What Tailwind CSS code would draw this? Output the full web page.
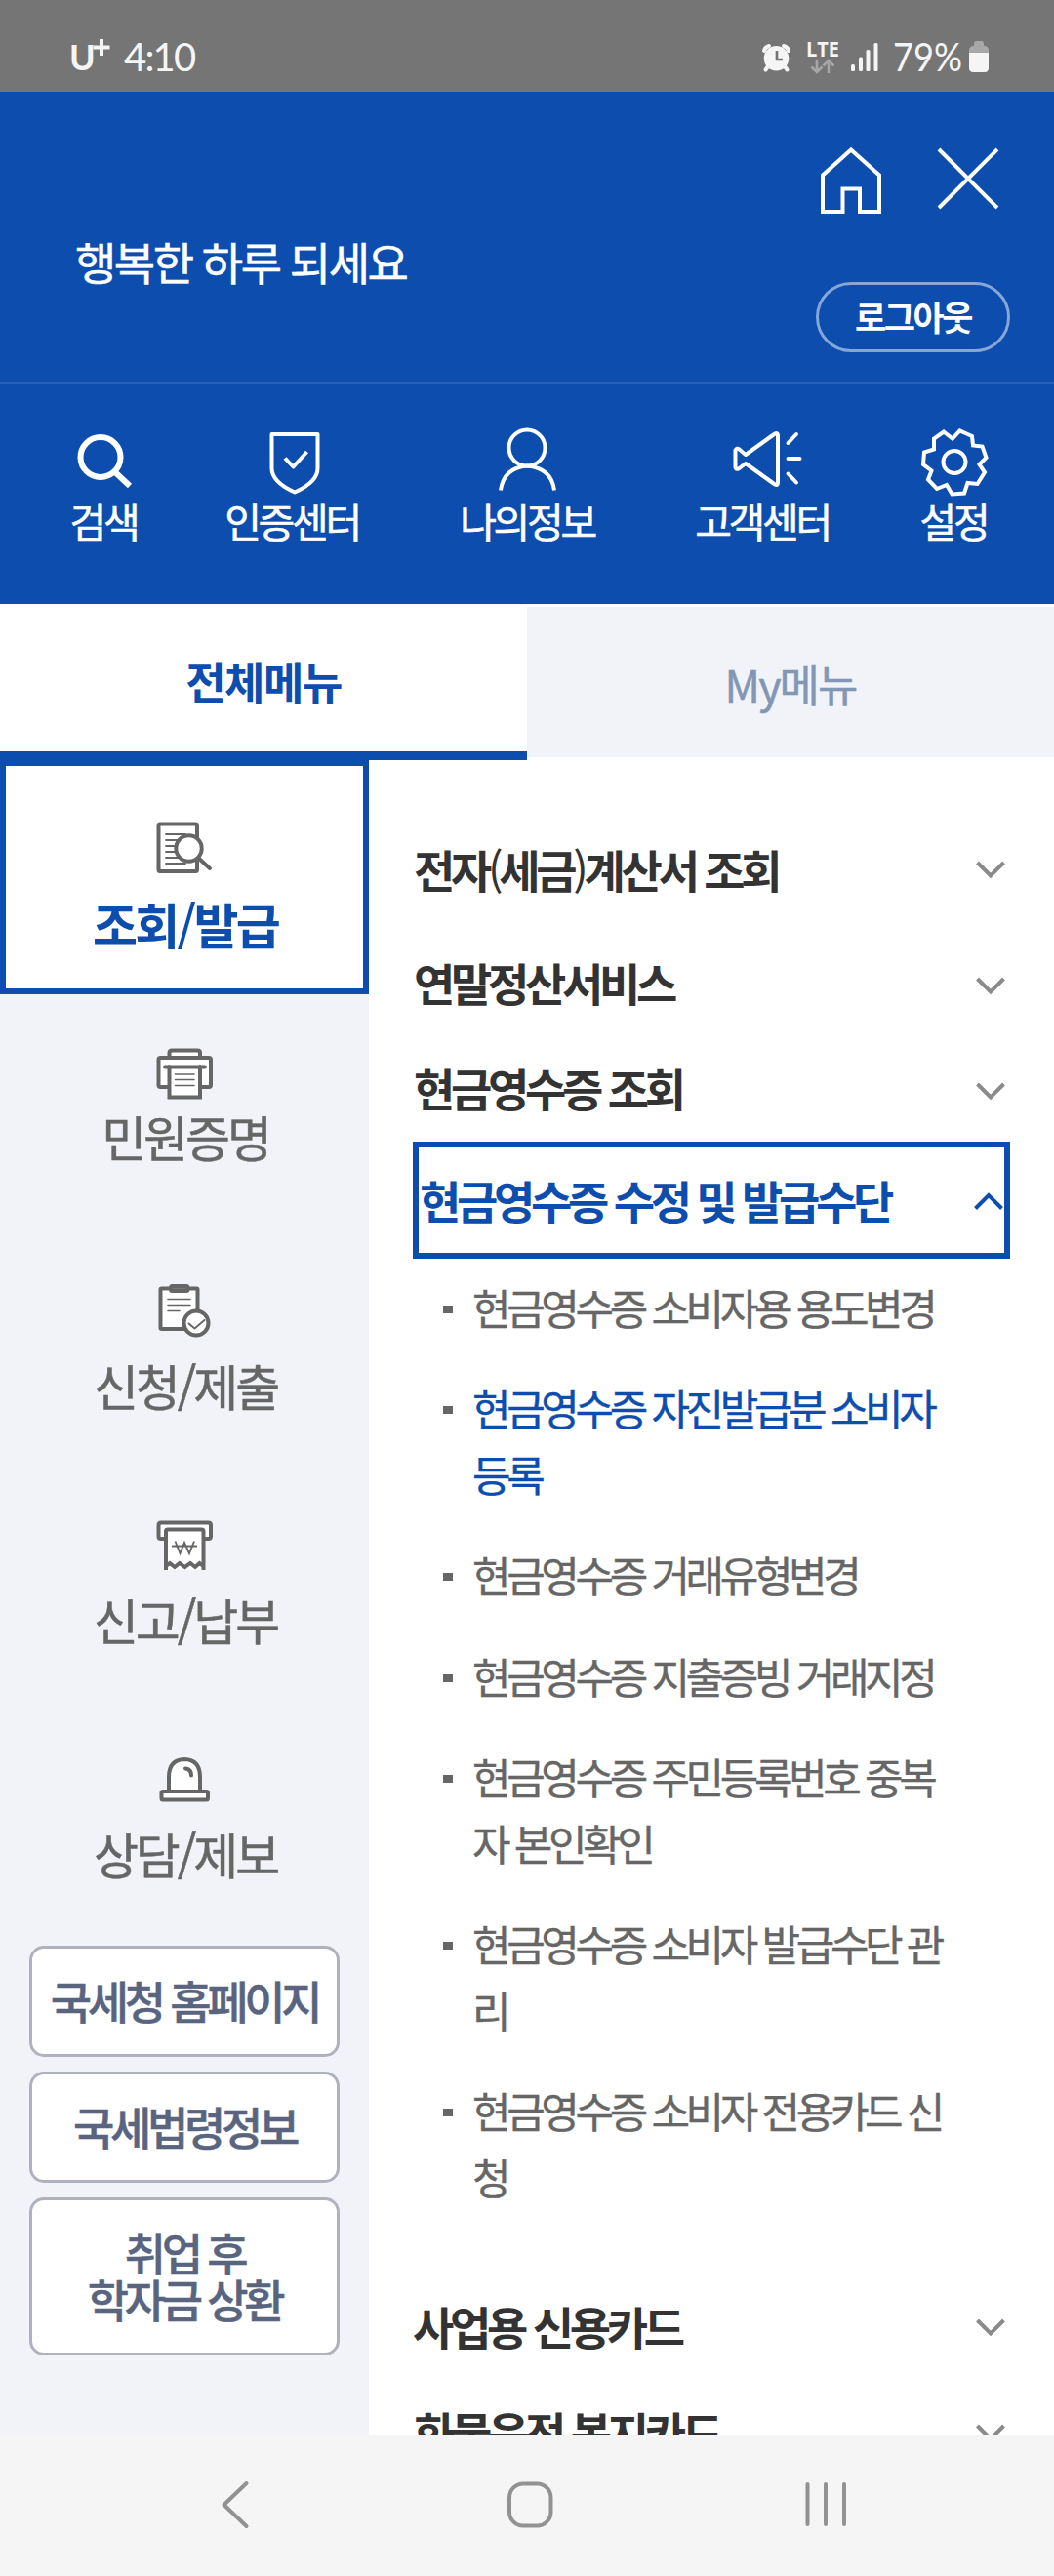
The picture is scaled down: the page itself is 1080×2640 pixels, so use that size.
<!DOCTYPE html>
<html lang="ko">
<head>
<meta charset="utf-8">
<title>홈택스 전체메뉴</title>
<script src="https://cdn.jsdelivr.net/npm/@tailwindcss/browser@4"></script>
</head>
<body class="w-[1080px] h-[2640px] overflow-hidden bg-white font-['Noto_Sans_CJK_KR',sans-serif] flex flex-col">

<!-- status bar -->
<div class="h-[94px] shrink-0 bg-[#757575] text-[#f5f5f5] flex items-start justify-between pl-[71px] pr-[66px]">
  <div class="flex pt-[30px] leading-[56px]">
    <span class="w-[30px] text-[36px] font-bold font-['Lato',sans-serif]">U</span>
    <svg class="w-[20px] h-[18px] -ml-[6px] mt-[10px]" viewBox="0 0 20 18" fill="none" stroke="#f5f5f5" stroke-width="4"><path d="M9 0v17M.5 8.500h17"/></svg>
    <span class="ml-[12px] text-[40px] tracking-[-1.800px] font-['Lato',sans-serif]">4:10</span>
  </div>
  <div class="flex pt-[22px]">
    <svg class="w-[234px] h-[66px]" viewBox="780 22 234 66">
      <g fill="none" stroke="#f5f5f5" stroke-width="4" stroke-linecap="round"><path d="M783 52q1-4 5-5M808 52q-1-4-5-5M787 68l-2.500 3.500M804 68l2.500 3.500"/></g>
      <circle cx="795.500" cy="59.800" r="12.800" fill="#f5f5f5"/>
      <path d="M796 52v9h6" fill="none" stroke="#757575" stroke-width="2.600"/>
      <g fill="none" stroke="#a6a6a6" stroke-width="2.600"><path d="M837 61v13M831.500 68.500l5.500 5.500 5.500-5.500M849 75V62M843.500 67.500l5.500-5.500 5.500 5.500"/></g>
      <g fill="#f5f5f5"><rect x="872" y="66" width="4" height="7" rx="1.500"/><rect x="880" y="58.500" width="4" height="14.500" rx="1.500"/><rect x="887.500" y="51" width="4" height="22" rx="1.500"/><rect x="895.500" y="44" width="4" height="29" rx="1.500"/></g>
      <path d="M998 44.500q0-2.500 2.500-2.500h5q2.500 0 2.500 2.500v2q5 1 5 5V55h-20v-3.500q0-4 5-5z" fill="#a8a8a8"/>
      <path d="M993 54h20v15.500q0 4.500-4.500 4.500h-11q-4.500 0-4.500-4.500z" fill="#f5f5f5"/>
      <text x="826" y="58" font-family="Open Sans" font-weight="700" font-size="21" textLength="34" lengthAdjust="spacingAndGlyphs" fill="#f5f5f5">LTE</text>
      <text x="915" y="72.500" font-family="Lato" font-size="40" textLength="71" lengthAdjust="spacingAndGlyphs" fill="#f5f5f5">79%</text>
    </svg>
  </div>
</div>

<!-- header -->
<header class="h-[525px] shrink-0 bg-[#0d4dae] text-white">
  <div class="h-[300px] border-b-3 border-[#2960b7] flex justify-between pl-[77px] pr-[45px]">
    <div class="pt-[143px] text-[46px] leading-[60px] tracking-[-2.500px] [-webkit-text-stroke:0.6px]">행복한 하루 되세요</div>
    <div class="w-[199px] pt-[56px]">
      <div class="flex justify-between pl-[4px] pr-[11px]">
        <svg class="w-[64px] h-[71px]" viewBox="840 150 64 71" fill="none" stroke="#fff" stroke-width="4"><path d="M843 217V179.500L872 153.500 901 179.500V217H881V193.500H863.500V217Z"/></svg>
        <svg class="w-[64px] h-[66px]" viewBox="960 151 64 66" fill="none" stroke="#fff" stroke-width="4"><path d="M962 154l60 60M1022 154l-60 60"/></svg>
      </div>
      <div class="mt-[68px] h-[72px] border-3 border-[#86a6d7] rounded-full text-center text-[35px] leading-[63px] font-bold tracking-[-2.500px]">로그아웃</div>
    </div>
  </div>
  <nav class="flex text-[41px] leading-[50px] tracking-[-3.300px] pt-[42px] [-webkit-text-stroke:0.6px]">
    <a class="ml-[56px] w-[100px] flex flex-col items-center">
      <svg class="w-[70px] h-[74px]" viewBox="71 436 70 74" fill="none" stroke="#fff" stroke-width="6"><circle cx="103" cy="468.500" r="20.500"/><path d="M117.500 483.500l15.500 14.500"/></svg>
      <span class="-mt-[2px]">검색</span></a>
    <a class="ml-[68px] w-[150px] flex flex-col items-center">
      <svg class="w-[70px] h-[74px]" viewBox="264 436 70 74" fill="none" stroke="#fff" stroke-width="4" stroke-linejoin="round"><path d="M278.500 445h47v35q0 14-23.500 24.500Q278.500 494 278.500 480Z"/><path d="M292 469.500l8.500 9 14-15.500"/></svg>
      <span class="-mt-[2px]">인증센터</span></a>
    <a class="ml-[91px] w-[150px] flex flex-col items-center">
      <svg class="w-[70px] h-[74px]" viewBox="505 436 70 74" fill="none" stroke="#fff" stroke-width="4"><circle cx="540" cy="459" r="18.500"/><path d="M513 502.500q3-23 27-25 25 2 28 25"/></svg>
      <span class="-mt-[2px]">나의정보</span></a>
    <a class="ml-[91px] w-[150px] flex flex-col items-center">
      <svg class="w-[74px] h-[74px]" viewBox="744 436 74 74" overflow="visible" fill="none" stroke="#fff" stroke-width="4" stroke-linejoin="round" stroke-linecap="round"><path d="M753.500 461.500q1.500-3 4-1l6.500 5.500 30-21.500q3-1.500 3 2v48q0 3.500-3 2l-30-21.500-6.500 5q-3 2-4-1z"/><path d="M807.500 454l8.500-9M807.500 470h12M807.500 485.500l8.500 9"/></svg>
      <span class="-mt-[2px]">고객센터</span></a>
    <a class="ml-[71px] w-[100px] flex flex-col items-center">
      <svg class="w-[74px] h-[74px]" viewBox="940 436 74 74" fill="none" stroke="#fff" stroke-width="4"><circle cx="978" cy="473.500" r="11.500"/><path d="M967 442.500L976 449.500 983.500 441.500 996 447 997 456.500 1006.500 457.500 1010.500 469 1003.500 476 1009 484 1001.500 496 991.500 495 988 505.500 975.500 506.500 970 497 960 501 951 491.500 954.500 482.500 946 476 947 463.500 957 460.500 957 449.500Z"/></svg>
      <span class="-mt-[2px]">설정</span></a>
  </nav>
</header>

<!-- tabs -->
<div class="h-[160px] shrink-0 flex text-center">
  <div class="w-[540px] h-[160px] border-b-9 border-[#0d4dae] text-[#0d4dae] text-[45px] leading-[157px] font-bold tracking-[-1.500px]">전체메뉴</div>
  <div class="w-[540px] h-[154px] mt-[3px] bg-[#f2f3f9] text-[#8297b3] text-[45px] leading-[158px] tracking-[-2px] [-webkit-text-stroke:0.5px]">My메뉴</div>
</div>

<!-- content -->
<main class="h-[1717px] shrink-0 flex overflow-hidden">
  <aside class="w-[378px] bg-[#f2f3f9] text-[#666] text-[50px] leading-[60px] tracking-[-3.100px] text-center [-webkit-text-stroke:0.5px]">
    <div class="h-[240px] bg-white border-6 border-[#0d4dae] text-[#0d4dae] flex flex-col items-center pt-[56px]">
      <svg class="w-[60px] h-[56px]" viewBox="159 842 60 56" fill="none" stroke="#666" stroke-width="4" stroke-linecap="round"><rect x="162.500" y="845.500" width="39.500" height="48.500" rx="1.500" fill="#fff"/><path d="M170 856h20M170 862h14M170 868h10M170 874h11M170 880h13M170 886h20" stroke-width="1.800"/><circle cx="193.500" cy="870.500" r="13.200" fill="#fff"/><path d="M203.500 880.500l11.500 10.500"/></svg>
      <span class="mt-[19px] pl-[2px] font-bold tracking-[-2.700px] [-webkit-text-stroke:0]">조회<span class="font-medium">/</span>발급</span>
    </div>
    <div class="h-[237px] flex flex-col items-center pt-[54px]">
      <svg class="w-[60px] h-[54px]" viewBox="159 1073 60 54" fill="#fff" stroke="#666" stroke-width="4" stroke-linecap="round"><path d="M173.500 1083v-4q0-2.500 2.500-2.500h26.500q2.500 0 2.500 2.500v4"/><rect x="162.500" y="1084" width="53.500" height="30" rx="2"/><path d="M173.500 1093v31.500H205V1093M169 1093.500h41"/><path d="M179.500 1101H199M179.500 1106.500H199M179.500 1112.500H199" stroke-width="1.600"/></svg>
      <span class="mt-[7px] pl-[2px]">민원증명</span>
    </div>
    <div class="h-[241px] flex flex-col items-center pt-[58px]">
      <svg class="w-[56px] h-[58px]" viewBox="162 1314 56 58" fill="#fff" stroke="#666" stroke-width="4" stroke-linecap="round"><rect x="165.500" y="1320.500" width="38" height="41.500" rx="1"/><rect x="176" y="1318" width="17.500" height="5" rx="1.500" fill="#777"/><path d="M173 1331.500h23M173 1337.500h23M173 1343.500h12" stroke-width="1.600"/><circle cx="202" cy="1356" r="12.500"/><path d="M194.500 1356.500l6 5 10-8.500" stroke-width="2" fill="none"/></svg>
      <span class="mt-[17px] pl-[2px]">신청/제출</span>
    </div>
    <div class="h-[240px] flex flex-col items-center pt-[59px]">
      <svg class="w-[60px] h-[56px]" viewBox="159 1555 60 56" fill="#fff" stroke="#666" stroke-width="4"><path d="M170 1576h-5q-2.500 0-2.500-2.500V1562q0-2.500 2.500-2.500h48.500q2.500 0 2.500 2.500v11.500q0 2.500-2.500 2.500h-5"/><path d="M170 1608v-39.500q0-2 2-2h34.500q2 0 2 2V1608" /><path d="M169.500 1604.500L174 1601l5 4 5-4 5.500 4 5.500-4 5 4 4.500-4 4.500 3.500"/><path d="M176 1583.500h26M179.500 1578.500l5 12.500 4.500-11 5 11 5-12.500" stroke-width="1.900" fill="none"/></svg>
      <span class="mt-[17px] pl-[2px]">신고/납부</span>
    </div>
    <div class="h-[257px] flex flex-col items-center pt-[62px]">
      <svg class="w-[56px] h-[50px]" viewBox="161 1798 56 50" fill="#fff" stroke="#666" stroke-width="4" stroke-linecap="round"><path d="M173 1834v-14q0-17.500 16-18 16 .5 16 18v14"/><rect x="165.500" y="1835" width="47.500" height="8.500" rx="1.500"/><path d="M190 1811.500q6 .5 6 7" fill="none"/></svg>
      <span class="mt-[20px] pl-[2px]">상담/제보</span>
    </div>
    <div class="px-[30px] flex flex-col gap-[15px] text-[46px] leading-[48px] font-medium tracking-[-4.300px] text-[#59647f]">
      <div class="h-[114px] flex items-center justify-center bg-white border-3 border-[#afb2be] rounded-[15px] pb-[4px]">국세청 홈페이지</div>
      <div class="h-[114px] flex items-center justify-center bg-white border-3 border-[#afb2be] rounded-[15px] pb-[4px]">국세법령정보</div>
      <div class="h-[162px] flex items-center justify-center bg-white border-3 border-[#afb2be] rounded-[15px] pb-[4px]">취업 후<br>학자금 상환</div>
    </div>
  </aside>

  <section class="flex-1 pl-[45px] pr-[45px] pt-[76px] text-[#333] text-[46px] leading-[70px] font-bold tracking-[-4.300px]">
    <div class="h-[116px] pl-[1px] pr-[5px] flex justify-between"><span>전자<span class="font-normal">(</span>세금<span class="font-normal">)</span>계산서 조회</span>
      <svg class="w-[30px] h-[20px] mt-[26px]" viewBox="0 0 30 20" fill="none" stroke="#8a8a8a" stroke-width="4"><path d="M1.500 3L15 16.500 28.500 3"/></svg></div>
    <div class="h-[108px] pl-[1px] pr-[5px] flex justify-between"><span>연말정산서비스</span>
      <svg class="w-[30px] h-[20px] mt-[29px]" viewBox="0 0 30 20" fill="none" stroke="#8a8a8a" stroke-width="4"><path d="M1.500 3L15 16.500 28.500 3"/></svg></div>
    <div class="h-[91px] pl-[1px] pr-[5px] flex justify-between"><span>현금영수증 조회</span>
      <svg class="w-[30px] h-[20px] mt-[29px]" viewBox="0 0 30 20" fill="none" stroke="#8a8a8a" stroke-width="4"><path d="M1.500 3L15 16.500 28.500 3"/></svg></div>
    <div class="h-[120px] border-6 border-[#0d4dae] text-[#0d4dae] pl-[1px] pr-[1px] pt-[18px] flex justify-between"><span>현금영수증 수정 및 발급수단</span>
      <svg class="w-[30px] h-[20px] mt-[27px]" viewBox="0 0 30 20" fill="none" stroke="#0d4dae" stroke-width="4"><path d="M1.500 17.500L15 4 28.500 17.500"/></svg></div>
    <ul class="pt-[16px] pl-[31px] flex flex-col gap-[35.600px] text-[43px] leading-[67.700px] font-normal tracking-[-4.400px] text-[#666] [-webkit-text-stroke:0.4px]">
      <li class="flex"><i class="w-[10px] h-[8px] mt-[32px] mr-[20px] bg-[#666]"></i><span>현금영수증 소비자용 용도변경</span></li>
      <li class="flex"><i class="w-[10px] h-[8px] mt-[32px] mr-[20px] bg-[#666]"></i><span class="text-[#0d4dae]">현금영수증 자진발급분 소비자<br>등록</span></li>
      <li class="flex"><i class="w-[10px] h-[8px] mt-[32px] mr-[20px] bg-[#666]"></i><span>현금영수증 거래유형변경</span></li>
      <li class="flex"><i class="w-[10px] h-[8px] mt-[32px] mr-[20px] bg-[#666]"></i><span>현금영수증 지출증빙 거래지정</span></li>
      <li class="flex"><i class="w-[10px] h-[8px] mt-[32px] mr-[20px] bg-[#666]"></i><span>현금영수증 주민등록번호 중복<br>자 본인확인</span></li>
      <li class="flex"><i class="w-[10px] h-[8px] mt-[32px] mr-[20px] bg-[#666]"></i><span>현금영수증 소비자 발급수단 관<br>리</span></li>
      <li class="flex"><i class="w-[10px] h-[8px] mt-[32px] mr-[20px] bg-[#666]"></i><span>현금영수증 소비자 전용카드 신<br>청</span></li>
    </ul>
    <div class="mt-[84px] h-[108px] pr-[5px] flex justify-between"><span>사업용 신용카드</span>
      <svg class="w-[30px] h-[20px] mt-[27px]" viewBox="0 0 30 20" fill="none" stroke="#8a8a8a" stroke-width="4"><path d="M1.500 3L15 16.500 28.500 3"/></svg></div>
    <div class="h-[108px] pl-[1px] pr-[5px] flex justify-between"><span>화물운전 복지카드</span>
      <svg class="w-[30px] h-[20px] mt-[27px]" viewBox="0 0 30 20" fill="none" stroke="#8a8a8a" stroke-width="4"><path d="M1.500 3L15 16.500 28.500 3"/></svg></div>
  </section>
</main>

<!-- navigation bar -->
<div class="h-[144px] shrink-0 bg-[#f5f5f5]">
  <svg class="w-[1080px] h-[144px]" viewBox="0 2496 1080 144" fill="none" stroke="#929292" stroke-width="4" stroke-linecap="round" stroke-linejoin="round"><path d="M252.500 2545l-23 22 23 22"/><rect x="522" y="2545.500" width="42.500" height="43" rx="14"/><path d="M827.500 2546v41M846 2546v41M865 2546v41"/></svg>
</div>
</body>
</html>
